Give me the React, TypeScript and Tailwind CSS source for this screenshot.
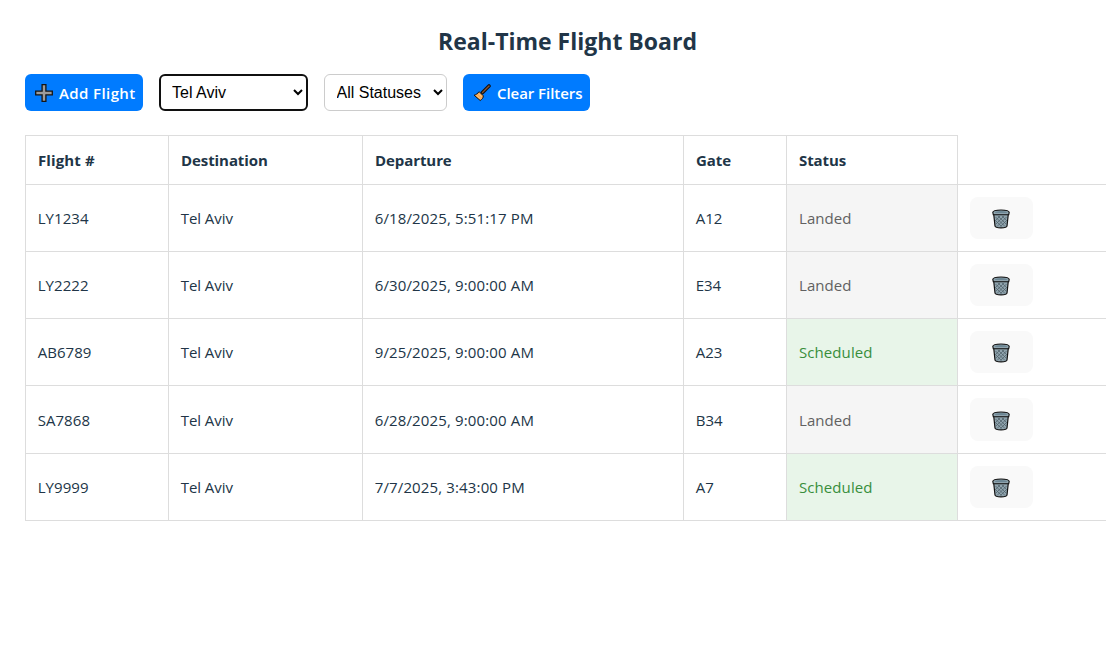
import type { ReactNode } from "react";

type Flight = { id: string; destination: string; departure: string; gate: string; status: "Landed" | "Scheduled" };

const flights: Flight[] = [
  { id: "LY1234", destination: "Tel Aviv", departure: "6/18/2025, 5:51:17 PM", gate: "A12", status: "Landed" },
  { id: "LY2222", destination: "Tel Aviv", departure: "6/30/2025, 9:00:00 AM", gate: "E34", status: "Landed" },
  { id: "AB6789", destination: "Tel Aviv", departure: "9/25/2025, 9:00:00 AM", gate: "A23", status: "Scheduled" },
  { id: "SA7868", destination: "Tel Aviv", departure: "6/28/2025, 9:00:00 AM", gate: "B34", status: "Landed" },
  { id: "LY9999", destination: "Tel Aviv", departure: "7/7/2025, 3:43:00 PM", gate: "A7", status: "Scheduled" },
];

const headings = ["Flight #", "Destination", "Departure", "Gate", "Status"];
const headingTracking = ["tracking-[0.12px]", "tracking-[-0.08px]", "tracking-[-0.08px]", "tracking-[-0.08px]", "tracking-[-0.08px]"];
const columns = "grid grid-cols-[143px_194px_321px_103px_171px_minmax(0,1fr)]";
const rowHeights = ["h-[67px]", "h-[67px]", "h-[67px]", "h-[68px]", "h-[67px]"];
const cellTracking = ["tracking-[0.05px]", "tracking-[-0.05px]", "tracking-[0.14px]", "tracking-normal"];

function PlusIcon() {
  return (
    <svg width="18" height="18" viewBox="0 0 18 18">
      <path d="M7.100.700h3.800v6.400h6.400v3.800h-6.400v6.400H7.100v-6.400H.700V7.100h6.400z" fill="#9b9b9b" stroke="#151515" strokeWidth="1.300" />
    </svg>
  );
}

function BroomIcon() {
  return (
    <svg width="18" height="18" viewBox="0 0 18 18">
      <path d="M9.500 8.500 16 2" stroke="#111" strokeWidth="3.600" strokeLinecap="round" />
      <path d="M9.500 8.500 16 2" stroke="#8d5632" strokeWidth="1.300" strokeLinecap="round" />
      <path d="M6.200 7.700 10.300 11.800c.2 1.900-1.300 3.700-3.100 4.700L1.100 11.200C3 10.800 4.800 9.300 6.200 7.700z" fill="#f6a95a" stroke="#111" strokeWidth="1" strokeLinejoin="round" />
      <path d="m3.800 11.500 3 3M6 10.200l2.600 2.600" stroke="#ffd082" strokeWidth="1" />
    </svg>
  );
}

function TrashIcon() {
  return (
    <svg width="18" height="20" viewBox="0 0 18 20">
      <path d="M1.700 5 3 17Q3.200 18.800 9 18.800T15 17L16.300 5z" fill="#8fa3ad" stroke="#111" strokeWidth="1.200" />
      <path d="m3.500 8 9.500 9.500M6 7l8.500 8.500M10 7l5 5M4 12l5.500 5.500M14.500 8 5 17.500M12 7l-8.500 8.500M8 7l-5 5M14 12l-5.500 5.500" stroke="#4c5d66" strokeWidth=".7" />
      <path d="M.8 3.400Q1 1 9 1t8.200 2.400L16.700 5.800H1.300z" fill="#90a4ae" stroke="#111" strokeWidth="1.100" strokeLinejoin="round" />
      <path d="M2.800 3Q9 1.700 15.200 3L14.500 3.800h-11z" fill="#607d8b" />
    </svg>
  );
}

function ActionButton({ icon, children, className }: { icon: ReactNode; children: ReactNode; className: string }) {
  return (
    <button className={`flex h-[37px] items-center rounded-md bg-[#007bff] pl-[10px] text-[15px] font-semibold whitespace-nowrap text-white ${className}`}>
      {icon}
      <span className="ml-[6px] pt-px">{children}</span>
    </button>
  );
}

export default function App() {
  return (
    <main className="h-[668px] w-full overflow-hidden bg-white pt-[23px] pl-[25px] font-['Open_Sans','Noto_Sans',sans-serif] text-[15px] text-[#213547]">
      <h1 className="w-[1085px] text-center text-[23px] leading-[36px] font-bold whitespace-nowrap">Real-Time Flight Board</h1>
      <div className="mt-[15px] flex h-[37px] gap-4">
        <ActionButton icon={<PlusIcon />} className="w-[118px] tracking-[0.4px]">Add Flight</ActionButton>
        <select className="w-[149px] rounded-md border-2 border-[#101010] bg-white px-[7px] font-['Liberation_Sans',Arial,sans-serif] text-[16px] text-black outline-none">
          <option>Tel Aviv</option>
        </select>
        <select className="w-[123px] rounded-md border border-[#ccc] bg-white pr-[8px] pl-[7.5px] font-['Liberation_Sans',Arial,sans-serif] text-[16px] text-black">
          <option>All Statuses</option>
        </select>
        <ActionButton icon={<BroomIcon />} className="w-[127px] tracking-[-0.05px]">Clear Filters</ActionButton>
      </div>
      <div className="mt-[24px]">
        <div className={`${columns} h-[49px]`}>
          {headings.map((heading, column) => (
            <div key={heading} className={`flex items-center border-t border-l border-[#ddd] pl-3 font-bold ${headingTracking[column]}`}>{heading}</div>
          ))}
          <div className="border-l border-[#ddd]" />
        </div>
        {flights.map((flight, index) => (
          <div key={flight.id} className={`${columns} ${rowHeights[index]}`}>
            {[flight.id, flight.destination, flight.departure, flight.gate].map((value, column) => (
              <div key={value} className={`flex items-center border-t border-l border-[#ddd] pl-[11.7px] ${cellTracking[column]} ${index === 3 ? "pt-px" : ""}`}>{value}</div>
            ))}
            <div className={`flex items-center border-t border-l border-[#ddd] pl-3 tracking-[0.08px] ${index === 3 ? "pt-px" : ""} ${flight.status === "Landed" ? "bg-[#f5f5f5] text-[#616161]" : "bg-[#e8f5e9] text-[#388e3c]"}`}>
              {flight.status}
            </div>
            <div className="border-t border-l border-[#ddd] pt-3 pl-3">
              <button aria-label="Delete flight" className={`flex w-[63px] items-center justify-center rounded-lg bg-[#f9f9f9] pt-[2px] pr-px ${index === 3 ? "h-[43px]" : "h-[42px]"}`}>
                <TrashIcon />
              </button>
            </div>
          </div>
        ))}
        <div className="border-t border-[#ddd]" />
      </div>
    </main>
  );
}
